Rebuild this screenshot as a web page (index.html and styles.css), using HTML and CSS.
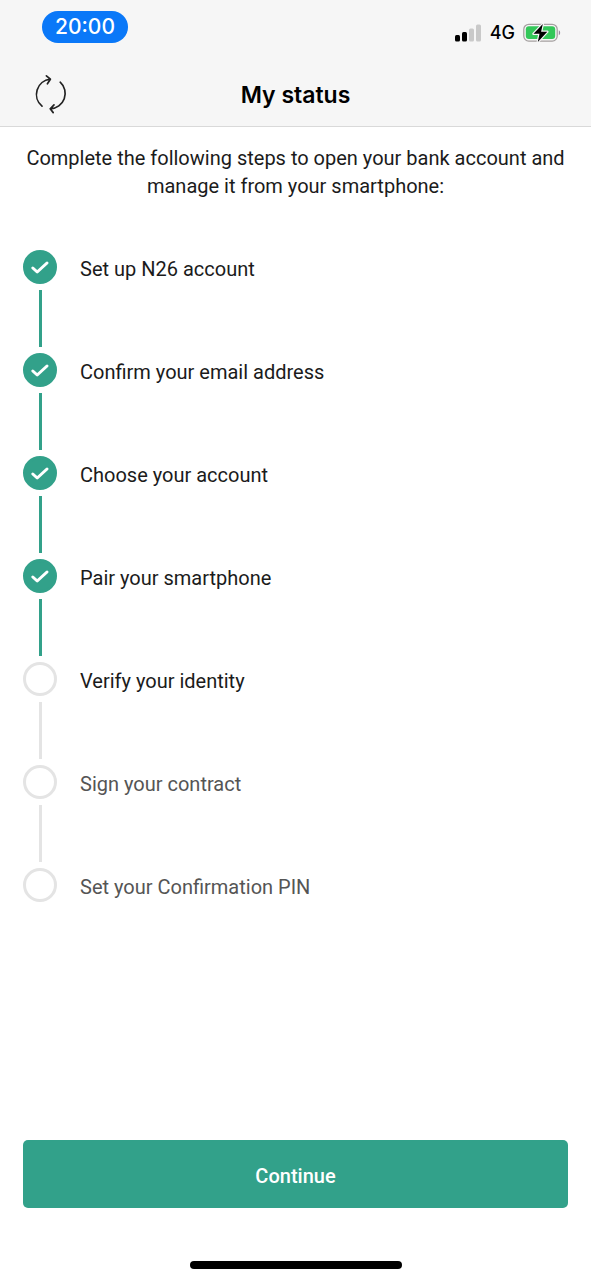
FILE: index.html
```html
<!DOCTYPE html>
<html lang="en">
<head>
<meta charset="utf-8">
<meta name="viewport" content="width=device-width, initial-scale=1">
<title>My status</title>
<link rel="stylesheet" href="styles.css">
</head>
<body>
<div class="screen">
  <header class="header">
    <div class="status-bar">
      <time class="clock">20:00</time>
      <div class="indicators">
        <svg class="signal" viewBox="0 0 27 18" aria-hidden="true">
          <rect x="0" y="11" width="5" height="6.5" rx="1.5" fill="#000"/>
          <rect x="7" y="8" width="5" height="9.5" rx="1.5" fill="#000"/>
          <rect x="14" y="4.5" width="5" height="13" rx="1.5" fill="#c9c9c9"/>
          <rect x="21" y="0.5" width="5" height="17" rx="1.5" fill="#c9c9c9"/>
        </svg>
        <span class="network">4G</span>
        <svg class="battery" viewBox="0 0 38 20" aria-hidden="true">
          <rect x="0.8" y="1.3" width="33.4" height="16.8" rx="5" fill="none" stroke="#a5a0a0" stroke-width="1.3"/>
          <rect x="2.8" y="3.3" width="29.4" height="12.8" rx="3" fill="#33c759"/>
          <path d="M35.8 7.2c1.8.7 1.8 4.3 0 5z" fill="#9a8aa0"/>
          <path d="M19.8 1 10.5 10.8h6L14.8 19 24.3 8.7h-6.2z" fill="#000" stroke="#f6f6f6" stroke-width="2.4" paint-order="stroke" stroke-linejoin="round"/>
        </svg>
      </div>
    </div>
    <div class="nav">
      <button class="refresh" type="button" aria-label="Refresh">
        <svg class="refresh-icon" viewBox="0 0 34 40" aria-hidden="true">
          <path d="M8 32.2A15.3 15.3 0 0 1 16.2 5.2M12.4 1.8 16.4 5.2 13.4 9.8M26.2 8.2A15.3 15.3 0 0 1 16.4 34.8M20 30.8 16.2 34.8 19.2 38.6"/>
        </svg>
      </button>
      <h1 class="title">My status</h1>
    </div>
  </header>
  <main class="content">
    <p class="intro">Complete the following steps to open your bank account and manage it from your smartphone:</p>
    <ol class="steps">
      <li class="step done"><span class="marker"><svg class="check" viewBox="0 0 20 16" aria-hidden="true"><path d="M2.8 9 7.2 13 17 4"/></svg></span><span class="label">Set up N26 account</span></li>
      <li class="step done"><span class="marker"><svg class="check" viewBox="0 0 20 16" aria-hidden="true"><path d="M2.8 9 7.2 13 17 4"/></svg></span><span class="label">Confirm your email address</span></li>
      <li class="step done"><span class="marker"><svg class="check" viewBox="0 0 20 16" aria-hidden="true"><path d="M2.8 9 7.2 13 17 4"/></svg></span><span class="label">Choose your account</span></li>
      <li class="step done"><span class="marker"><svg class="check" viewBox="0 0 20 16" aria-hidden="true"><path d="M2.8 9 7.2 13 17 4"/></svg></span><span class="label">Pair your smartphone</span></li>
      <li class="step current"><span class="marker"></span><span class="label">Verify your identity</span></li>
      <li class="step"><span class="marker"></span><span class="label">Sign your contract</span></li>
      <li class="step"><span class="marker"></span><span class="label">Set your Confirmation PIN</span></li>
    </ol>
  </main>
  <footer class="footer">
    <button class="continue" type="button">Continue</button>
    <div class="home-indicator"></div>
  </footer>
</div>
</body>
</html>
```
FILE: styles.css
```css
* {
  box-sizing: border-box;
}

body {
  margin: 0;
  background: #fff;
  color: #1b1b1b;
  font-family: Roboto, "Liberation Sans", sans-serif;
  font-size: 20px;
  line-height: 28px;
}

.screen {
  display: flex;
  flex-direction: column;
  min-height: 100vh;
}

.header {
  background: #f6f6f6;
  border-bottom: 1px solid #d9d9d9;
  color: #000;
  font-family: Inter, "Liberation Sans", sans-serif;
}

.status-bar {
  display: flex;
  justify-content: space-between;
  align-items: flex-start;
  padding: 11px 30px 19px 42px;
}

.clock {
  padding: 0 13px;
  border-radius: 16px;
  background: #0a78f8;
  color: #fff;
  font-size: 21px;
  font-weight: 500;
  line-height: 32px;
}

.indicators {
  display: flex;
  align-items: center;
  gap: 8px;
  padding-top: 12px;
}

.signal {
  width: 27px;
  height: 18px;
}

.network {
  font-size: 18px;
  font-weight: 500;
  line-height: 20px;
}

.battery {
  width: 38px;
  height: 20px;
}

.nav {
  display: grid;
  grid-template-columns: 34px 1fr 34px;
  align-items: center;
  padding: 0 34px;
  height: 64px;
}

.refresh {
  display: flex;
  padding: 0;
  border: 0;
  background: none;
}

.refresh-icon {
  width: 34px;
  height: 40px;
  fill: none;
  stroke: #222;
  stroke-width: 1.7;
  stroke-linecap: round;
  stroke-linejoin: round;
}

.title {
  margin: 0;
  padding-top: 2px;
  font-size: 23px;
  font-weight: 600;
  line-height: 32px;
  text-align: center;
}

.content {
  flex: 1;
  padding: 17px 23px 0;
}

.intro {
  margin: 0;
  text-align: center;
}

.steps {
  margin: 0;
  padding: 50px 0 0;
  list-style: none;
}

.step {
  display: grid;
  grid-template-columns: 34px 1fr;
  grid-template-rows: 34px 57px;
  gap: 6px 23px;
  padding-bottom: 6px;
  color: #555;
}

.step:last-child {
  grid-template-rows: 34px;
}

.step::after {
  content: "";
  justify-self: center;
  width: 3px;
  background: #e4e4e4;
}

.step:last-child::after {
  display: none;
}

.marker {
  display: flex;
  align-items: center;
  justify-content: center;
  border: 3px solid #e4e4e4;
  border-radius: 50%;
}

.label {
  padding-top: 5px;
}

.done,
.current {
  color: #1b1b1b;
}

.done::after,
.done .marker {
  background: #32a18a;
}

.done .marker {
  border-color: #32a18a;
}

.check {
  width: 20px;
  height: 16px;
  fill: none;
  stroke: #fff;
  stroke-width: 3;
  stroke-linecap: round;
  stroke-linejoin: round;
}

.footer {
  display: flex;
  flex-direction: column;
  gap: 53px;
  padding: 24px 23px 11px;
}

.continue {
  padding: 22px 16px 18px;
  border: 0;
  border-radius: 5px;
  background: #32a18a;
  color: #fff;
  font-family: inherit;
  font-size: 20px;
  font-weight: 500;
  line-height: 28px;
}

.home-indicator {
  align-self: center;
  width: 212px;
  height: 8px;
  border-radius: 4px;
  background: #000;
}
```
